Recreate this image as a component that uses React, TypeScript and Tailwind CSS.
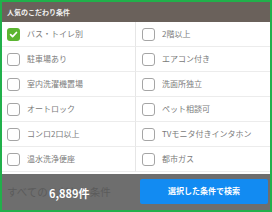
import React from "react";

const items: [string, boolean][] = [
  ["バス・トイレ別", true],
  ["2階以上", false],
  ["駐車場あり", false],
  ["エアコン付き", false],
  ["室内洗濯機置場", false],
  ["洗面所独立", false],
  ["オートロック", false],
  ["ペット相談可", false],
  ["コンロ2口以上", false],
  ["TVモニタ付きインタホン", false],
  ["温水洗浄便座", false],
  ["都市ガス", false],
];

function Box({ checked }: { checked: boolean }) {
  if (checked) {
    return (
      <div className="w-[13px] h-[13px] rounded-[3px] bg-[#5bb531] flex items-center justify-center shrink-0">
        <svg width="9" height="9" viewBox="0 0 10 10">
          <path d="M1.8 5.2 L4 7.3 L8.3 2.8" fill="none" stroke="#fff" strokeWidth="1.9" strokeLinecap="round" strokeLinejoin="round" />
        </svg>
      </div>
    );
  }
  return <div className="w-[13px] h-[13px] rounded-[3px] border border-[#a5a5a5] bg-white shrink-0" />;
}

export default function App() {
  return (
    <div
      className="w-[272px] h-[212px] border-2 border-[#21b04b] bg-white relative overflow-hidden"
      style={{ fontFamily: '"Noto Sans CJK JP", "Noto Sans", sans-serif' }}
    >
      <div className="h-[20px] bg-[#6a615b] flex items-center pl-[5px] text-[7px] font-bold text-[#f2f2f2]">
        人気のこだわり条件
      </div>
      <div className="grid grid-cols-2">
        {items.map(([label, checked], i) => (
          <div
            key={label}
            className={`h-[25px] flex items-center border-b border-[#ececec] ${
              i % 2 === 0 ? "pl-[5px] border-r border-r-[#e6e6e6]" : "pl-[6px]"
            }`}
          >
            <Box checked={checked} />
            <span className="ml-[7px] text-[8px] text-[#7a7a7a] whitespace-nowrap">{label}</span>
          </div>
        ))}
      </div>
      <div className="absolute left-0 right-0 bottom-0 h-[36px] bg-[#6e6e6e] flex items-center pr-[2px]">
        <div className="relative flex-1 h-full flex items-center">
          <span className="absolute left-[5px] top-[10px] text-[10.5px] text-[#5b5b5b] whitespace-nowrap">
            すべてのこだわり条件
          </span>
          <span className="absolute left-[47px] top-[11px] text-[11px] font-bold text-white whitespace-nowrap">
            6,889件
          </span>
        </div>
        <div className="w-[128px] h-[25px] mb-[2px] rounded-[2px] bg-[#128bf2] flex items-center justify-center text-[8px] font-bold text-white">
          選択した条件で検索
        </div>
      </div>
    </div>
  );
}
